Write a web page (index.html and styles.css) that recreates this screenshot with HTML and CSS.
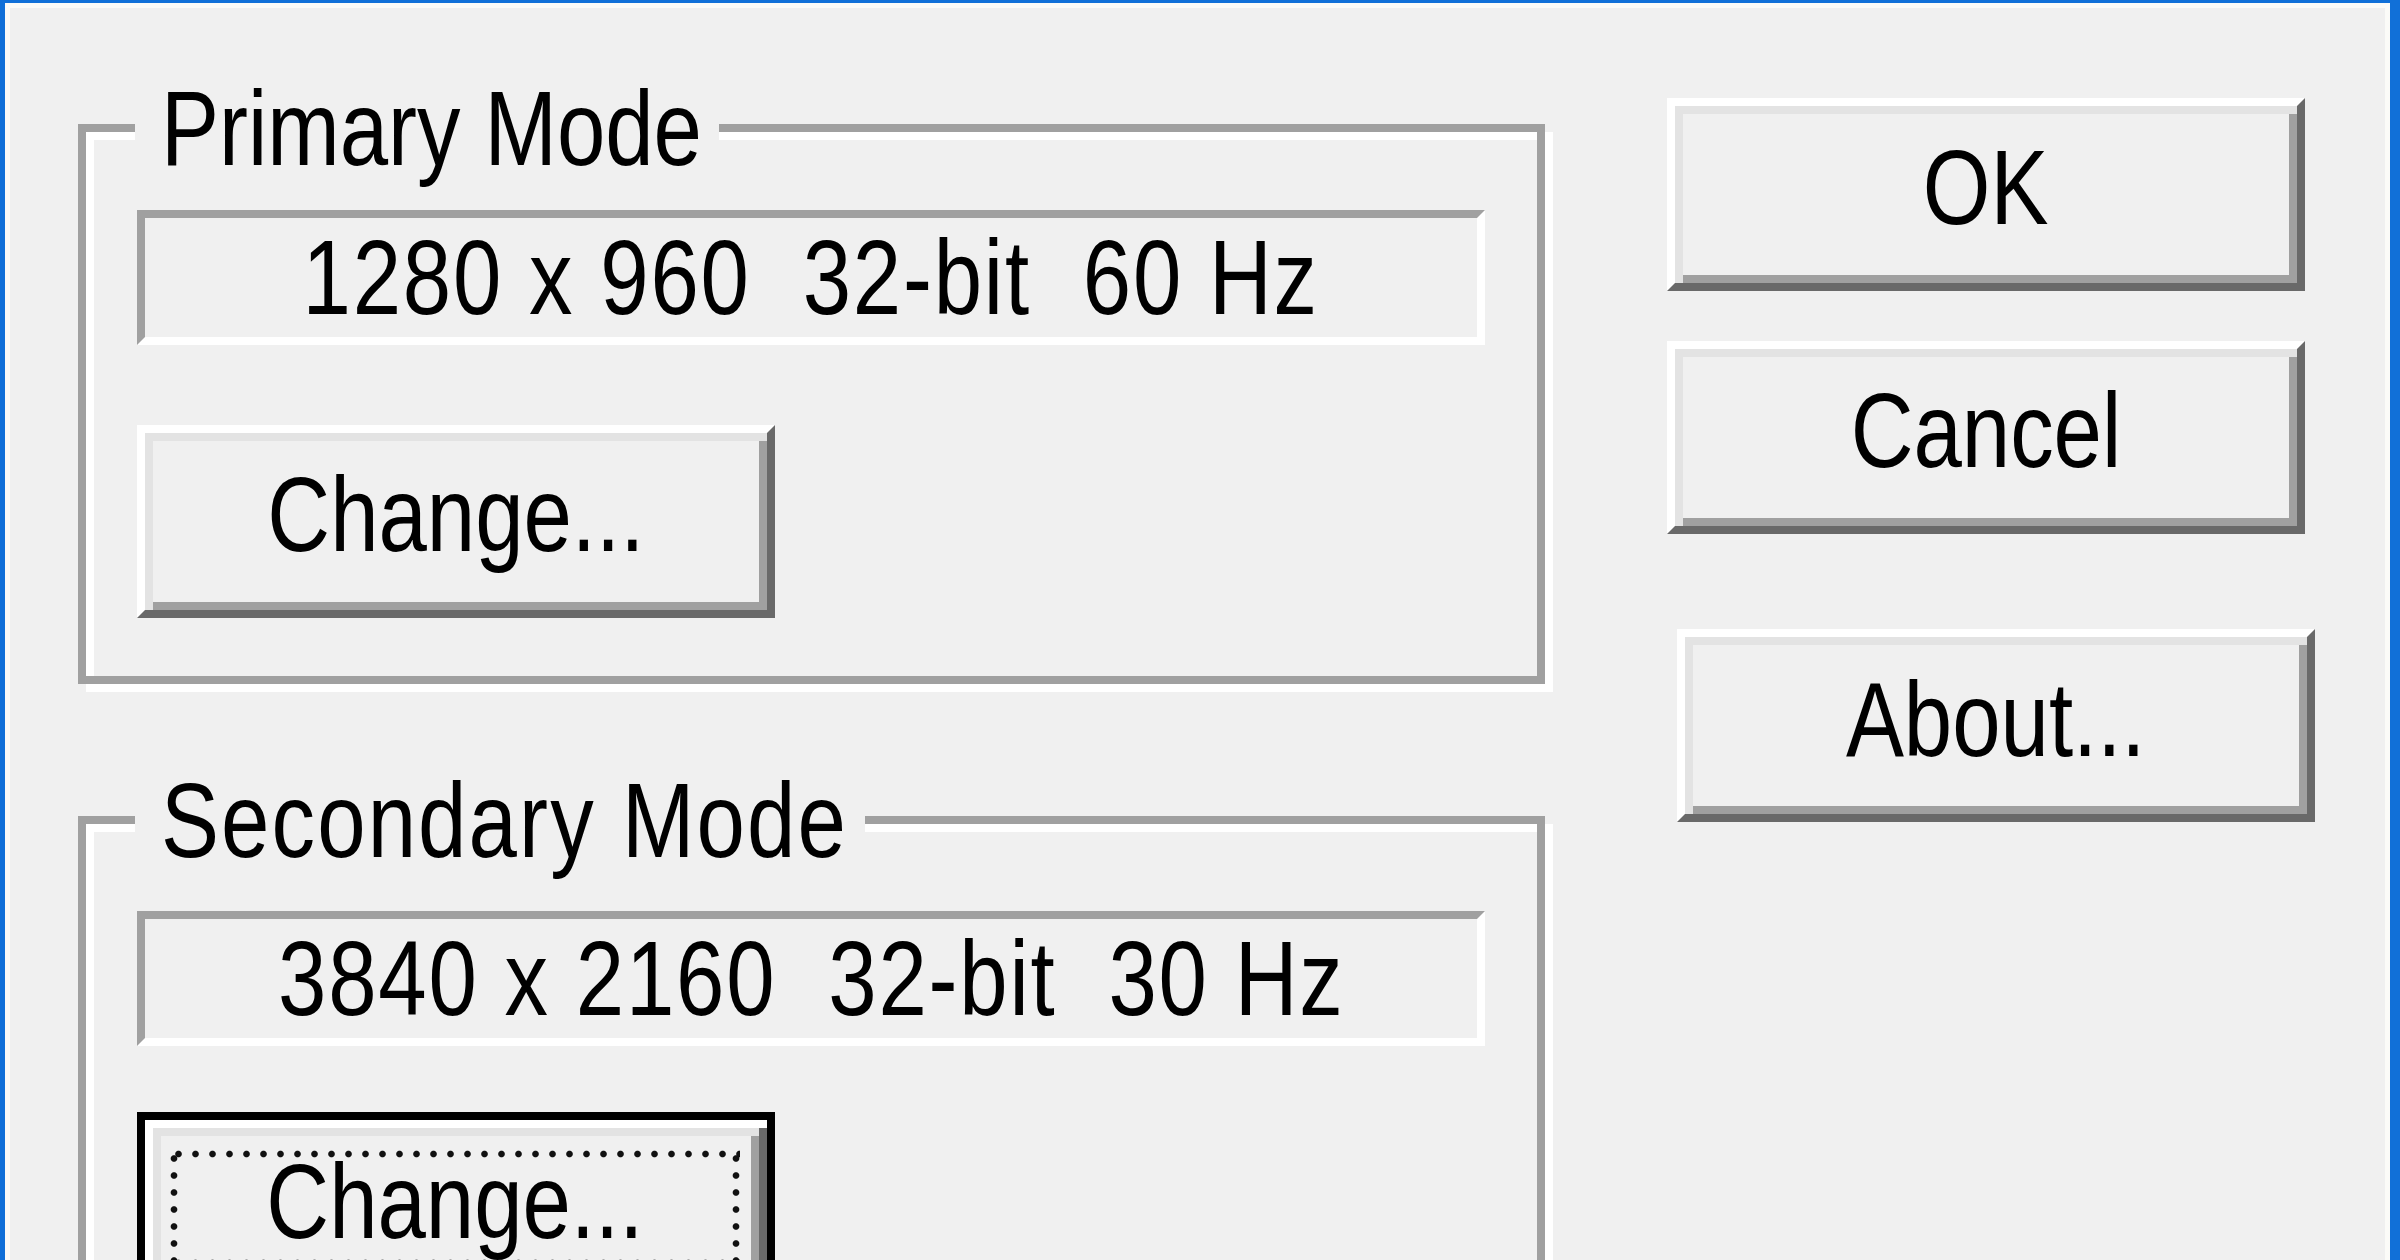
FILE: index.html
```html
<!DOCTYPE html>
<html lang="en">
<head>
<meta charset="utf-8">
<title>Display Mode</title>
<link rel="stylesheet" href="styles.css">
</head>
<body>
<div class="window">
  <div class="main-col">
    <fieldset class="group">
      <legend class="group-title title-primary"><span class="narrow narrow-left">Primary Mode</span></legend>
      <div class="mode-display"><span class="narrow">1280 x 960  32-bit  60 Hz</span></div>
      <button class="btn btn-change" type="button"><span class="narrow">Change...</span></button>
    </fieldset>
    <fieldset class="group group-secondary">
      <legend class="group-title title-secondary"><span class="narrow narrow-left">Secondary Mode</span></legend>
      <div class="mode-display"><span class="narrow">3840 x 2160  32-bit  30 Hz</span></div>
      <button class="btn btn-change btn-default" type="button"><span class="focus-ring"><span class="narrow">Change...</span></span></button>
    </fieldset>
  </div>
  <div class="side-col">
    <button class="btn btn-ok" type="button"><span class="narrow">OK</span></button>
    <button class="btn btn-cancel" type="button"><span class="narrow">Cancel</span></button>
    <button class="btn btn-about" type="button"><span class="narrow">About...</span></button>
  </div>
</div>
</body>
</html>
```
FILE: styles.css
```css
html, body {
  margin: 0;
  padding: 0;
  background: #f0f0f0;
  overflow: hidden;
}

body {
  font-family: "Liberation Sans", Arial, sans-serif;
  font-size: 106px;
  color: #000;
}

.narrow {
  display: inline-block;
  white-space: pre;
  transform: scaleX(0.82);
  transform-origin: center center;
}

.narrow-left {
  transform-origin: left center;
}

.window {
  box-sizing: border-box;
  width: 2400px;
  height: 1260px;
  overflow: hidden;
  background: #f0f0f0;
  border-style: solid;
  border-color: #1170d8;
  border-width: 3px 10px 0 5px;
  box-shadow: inset 5px 5px 0 #fbfbf8, inset -5px 0 0 #fbfbf8;
  display: flex;
  align-items: flex-start;
  gap: 122px;
  padding: 75px 0 0 73px;
}

.main-col {
  display: flex;
  flex-direction: column;
  width: 1467px;
  flex: none;
}

.group {
  box-sizing: border-box;
  width: 1467px;
  margin: 0;
  padding: 0 0 58px 0;
  min-inline-size: 0;
  border: 8px solid #a0a0a0;
  box-shadow: inset 8px 8px 0 #fff, 8px 8px 0 #fff;
  display: flex;
  flex-direction: column;
  align-items: flex-start;
}

.group-secondary {
  margin-top: 86px;
}

.group-title {
  box-sizing: border-box;
  margin-left: 49px;
  padding: 0 0 0 26px;
  height: 100px;
  line-height: 100px;
  background: #f0f0f0;
  white-space: nowrap;
  overflow: visible;
}

.title-primary {
  width: 584px;
}

.title-secondary {
  width: 730px;
}

.title-secondary .narrow {
  letter-spacing: 2.6px;
}

.mode-display {
  box-sizing: border-box;
  width: 1348px;
  height: 135px;
  margin: 32px 0 0 51px;
  border-style: solid;
  border-width: 8px;
  border-color: #a0a0a0 #fff #fff #a0a0a0;
  line-height: 119px;
  text-align: center;
  white-space: nowrap;
}

.mode-display .narrow {
  letter-spacing: 2.2px;
}

.group-secondary .mode-display {
  margin-top: 41px;
}

.btn {
  box-sizing: border-box;
  width: 638px;
  height: 193px;
  margin: 0;
  padding: 0 0 14px 0;
  font: inherit;
  color: #000;
  background: #f0f0f0;
  border: 8px solid;
  border-color: #fff #696969 #696969 #fff;
  box-shadow: inset 8px 8px 0 #e3e3e3, inset -8px -8px 0 #a0a0a0;
  border-radius: 0;
  display: flex;
  align-items: center;
  justify-content: center;
  flex: none;
  white-space: nowrap;
  line-height: normal;
}

.btn-change {
  margin: 80px 0 0 51px;
}

.group-secondary .btn-change {
  margin-top: 66px;
}

.btn-default {
  border-color: #000;
  box-shadow: inset 8px 8px 0 #fff, inset -8px -8px 0 #696969, inset 16px 16px 0 #e3e3e3, inset -16px -16px 0 #a0a0a0;
  padding: 30px 27px 30px 25px;
  align-items: stretch;
}

.focus-ring {
  flex: 1;
  display: flex;
  align-items: center;
  justify-content: center;
  padding-bottom: 14px;
  background:
    radial-gradient(circle, #111 2.8px, transparent 3.8px) 0 0 / 17px 8px repeat-x,
    radial-gradient(circle, #111 2.8px, transparent 3.8px) 0 100% / 17px 8px repeat-x,
    radial-gradient(circle, #111 2.8px, transparent 3.8px) 0 0 / 8px 17px repeat-y,
    radial-gradient(circle, #111 2.8px, transparent 3.8px) 100% 0 / 8px 17px repeat-y;
}

.side-col {
  display: flex;
  flex-direction: column;
  align-items: flex-start;
  margin-top: 20px;
}

.btn-cancel {
  margin-top: 50px;
}

.btn-about {
  margin-top: 95px;
  margin-left: 10px;
  padding-bottom: 12px;
}
```
